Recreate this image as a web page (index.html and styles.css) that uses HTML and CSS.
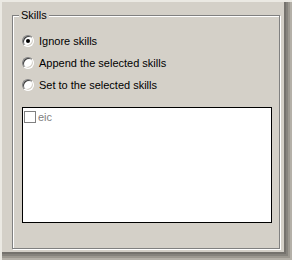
FILE: index.html
```html
<!DOCTYPE html>
<html lang="en">
<head>
  <meta charset="UTF-8" />
  <title>Skills</title>
  <link rel="stylesheet" href="styles.css">
</head>
<body>

  <div class="frame">
    <div class="group">
      <span class="legend">Skills</span>

      <div class="options">
        <label class="option"><span class="radio checked"></span>Ignore skills</label>
        <label class="option"><span class="radio"></span>Append the selected skills</label>
        <label class="option"><span class="radio"></span>Set to the selected skills</label>
      </div>

      <div class="listbox">
        <div class="item"><span class="check"></span>eic</div>
      </div>
    </div>
  </div>

</body>
</html>
```

FILE: styles.css
```css
body {
  margin: 0;
  font-family: 'Liberation Sans', Arial, sans-serif;
  font-size: 11px;
  color: #000;
  background: #d4d0c8;
}

.frame {
  width: 292px;
  height: 260px;
  box-sizing: border-box;
  padding: 15px 12px 11px 12px;
  background: #d4d0c8;
  box-shadow:
    inset 2px 2px 0 #ebe9e3,
    inset -2px -2px 0 #b4b0a8,
    inset -4px -4px 0 #9c9890,
    inset -6px -6px 0 #86837d,
    inset -8px -8px 0 #75726d;
}

.group {
  position: relative;
  width: 268px;
  height: 234px;
  box-sizing: border-box;
  border: 1px solid #808080;
  box-shadow: 1px 1px 0 #fff, inset 1px 1px 0 #fff;
  padding: 18px 0 0 9px;
}

.legend {
  position: absolute;
  top: -8px;
  left: 6px;
  padding: 0 2px;
  background: #d4d0c8;
  line-height: 14px;
}

.options {
  display: flex;
  flex-direction: column;
  gap: 9px;
}

.option {
  display: flex;
  align-items: center;
  gap: 5px;
  height: 13px;
}

.radio {
  width: 12px;
  height: 12px;
  box-sizing: border-box;
  border-radius: 50%;
  background: #fff;
  border: 1px solid;
  border-color: #808080 #fff #fff #808080;
  box-shadow: inset 1px 1px 0 #404040, inset -1px -1px 0 #d4d0c8;
  position: relative;
}

.radio.checked::after {
  content: "";
  position: absolute;
  left: 3px;
  top: 3px;
  width: 4px;
  height: 4px;
  border-radius: 50%;
  background: #000;
}

.listbox {
  margin: 16px 0 0 0;
  width: 250px;
  height: 116px;
  box-sizing: border-box;
  border: 1px solid #000;
  background: #fff;
  padding: 3px 0 0 1px;
}

.item {
  display: flex;
  align-items: center;
  gap: 2px;
  color: #808080;
}

.check {
  width: 12px;
  height: 12px;
  box-sizing: border-box;
  border: 1px solid #808080;
}
```
